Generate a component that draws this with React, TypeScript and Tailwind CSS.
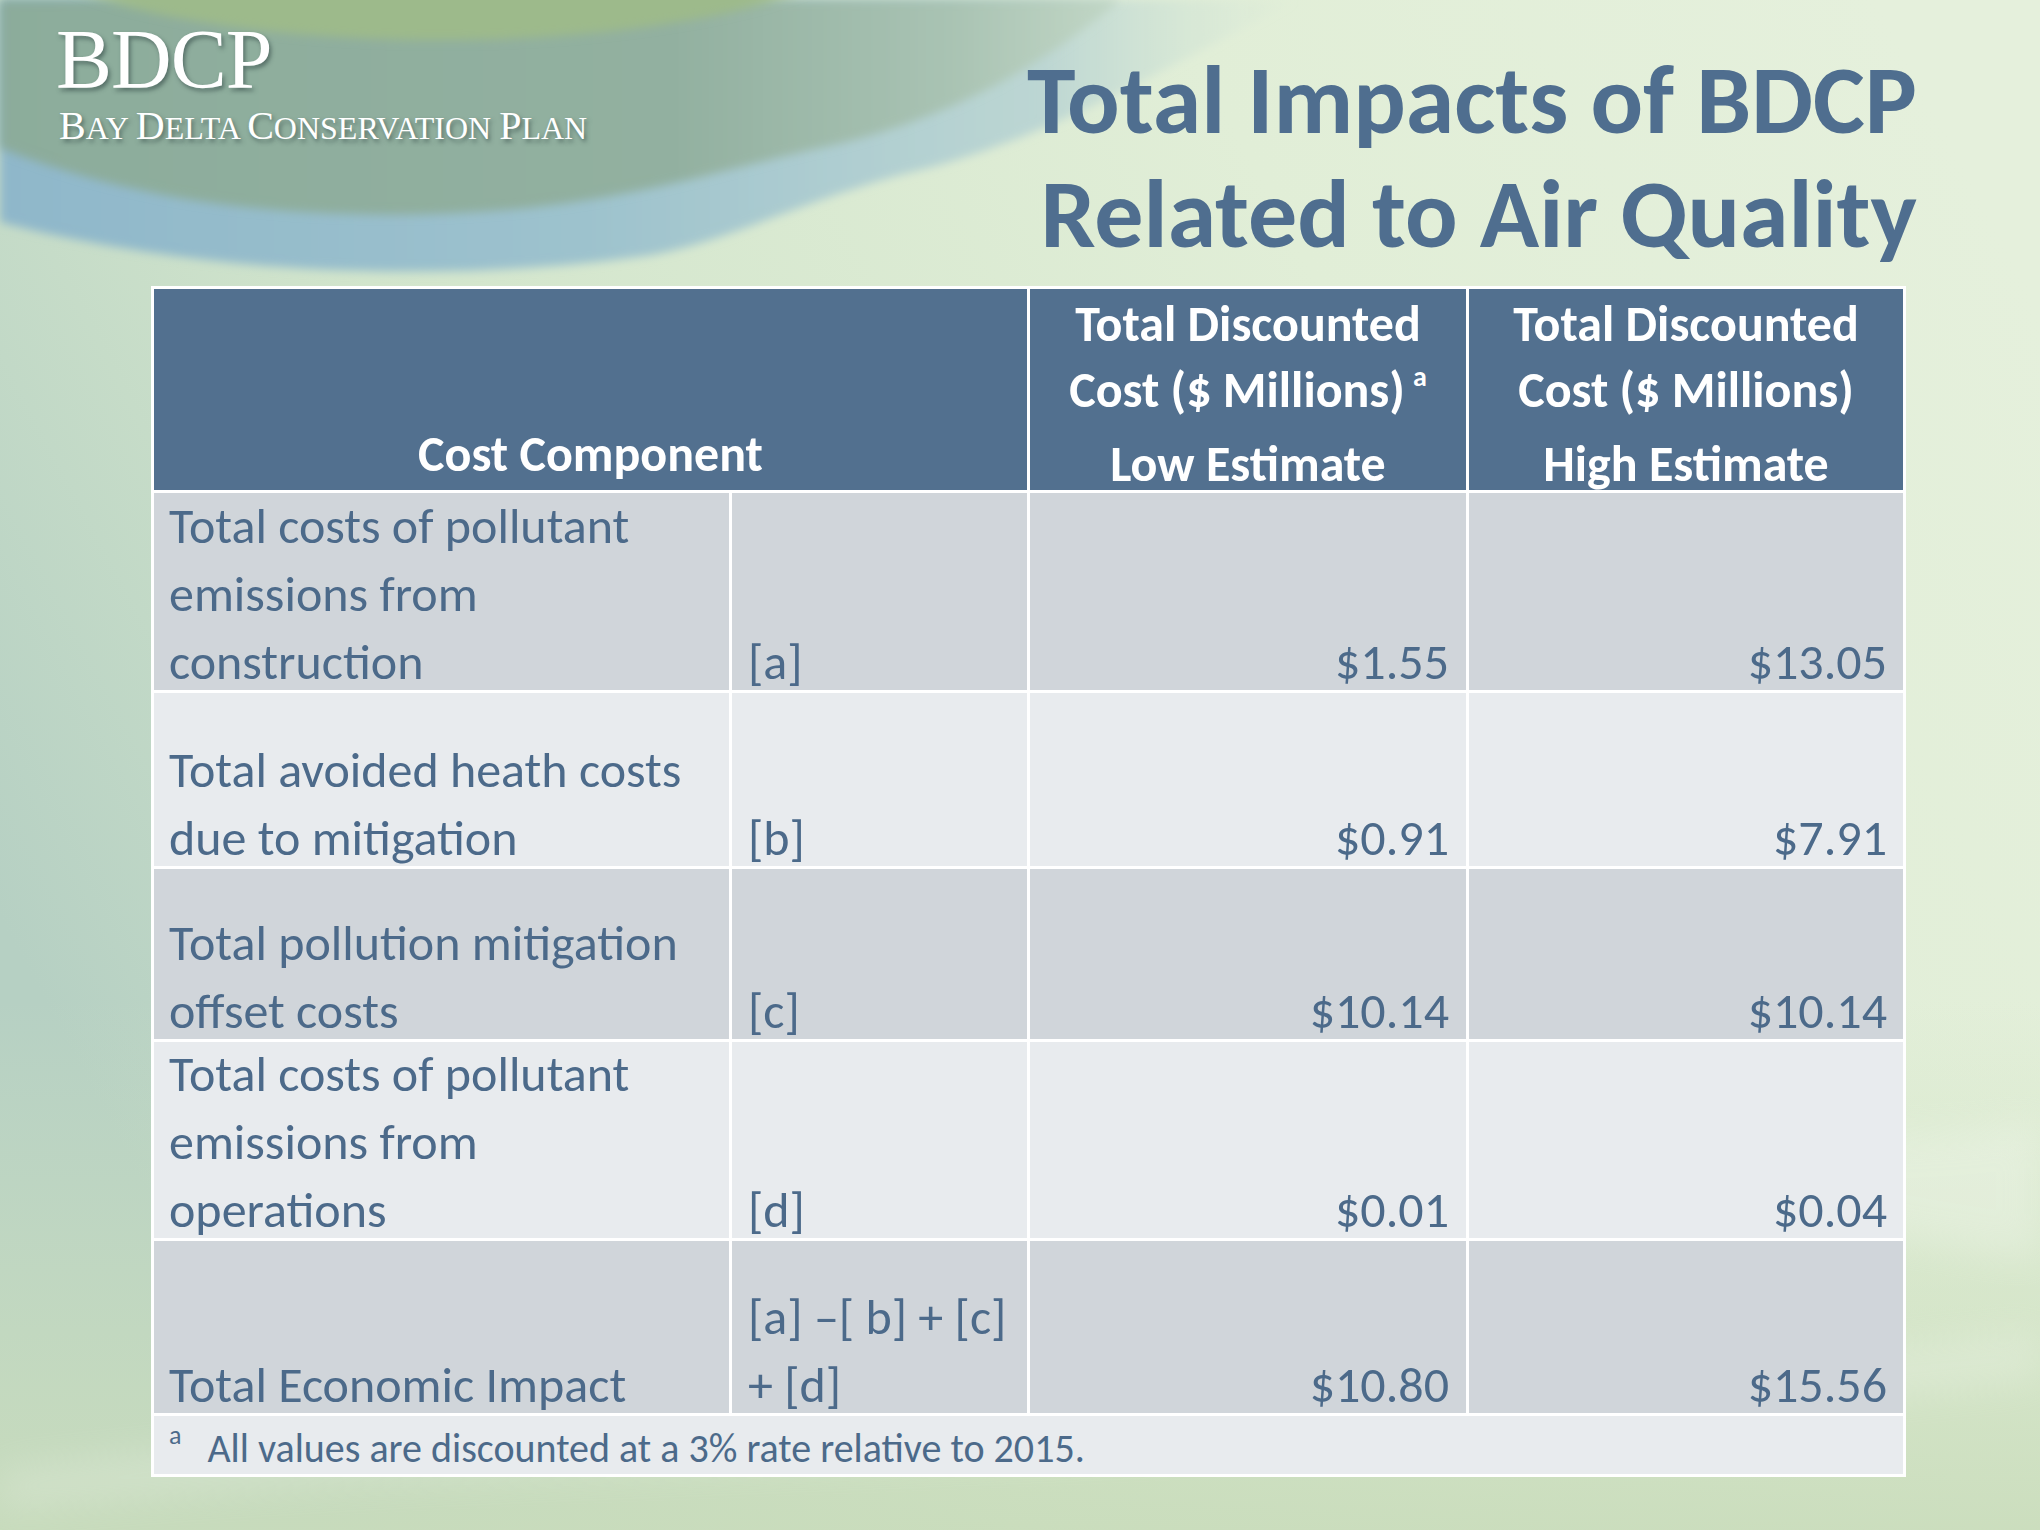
import React from 'react';

const rows = [
  { lines: ['Total costs of pollutant', 'emissions from', 'construction'], ref: ['[a]'], low: '$1.55', high: '$13.05', h: 'h-[197px]', shade: 'bg-[#d0d5da]' },
  { lines: ['Total avoided heath costs', 'due to mitigation'], ref: ['[b]'], low: '$0.91', high: '$7.91', h: 'h-[173px]', shade: 'bg-[#e8ebee]' },
  { lines: ['Total pollution mitigation', 'offset costs'], ref: ['[c]'], low: '$10.14', high: '$10.14', h: 'h-[170px]', shade: 'bg-[#d0d5da]' },
  { lines: ['Total costs of pollutant', 'emissions from', 'operations'], ref: ['[d]'], low: '$0.01', high: '$0.04', h: 'h-[196px]', shade: 'bg-[#e8ebee]' },
  { lines: ['Total Economic Impact'], ref: ['[a] \u2013[ b] + [c]', '+ [d]'], low: '$10.80', high: '$15.56', h: 'h-[172px]', shade: 'bg-[#d0d5da]' },
];

const Background = () => (
  <svg className="absolute inset-0 w-full h-full" viewBox="0 0 2040 1530" preserveAspectRatio="none">
    <defs>
      <linearGradient id="base" x1="0" y1="0.6" x2="1" y2="0.2">
        <stop offset="0" stopColor="#b6d0c3" />
        <stop offset="0.3" stopColor="#d2e5cc" />
        <stop offset="0.7" stopColor="#e1eed7" />
        <stop offset="1" stopColor="#e5f0dc" />
      </linearGradient>
      <linearGradient id="bottom" x1="0" y1="0" x2="0" y2="1">
        <stop offset="0" stopColor="#cfe2c2" stopOpacity="0" />
        <stop offset="1" stopColor="#c9dcbb" stopOpacity="0.9" />
      </linearGradient>
      <linearGradient id="blue" x1="0" y1="0" x2="1" y2="0">
        <stop offset="0" stopColor="#8fb7ca" />
        <stop offset="0.45" stopColor="#9dc2cd" />
        <stop offset="0.8" stopColor="#bcd6d3" />
        <stop offset="1" stopColor="#d3e5d6" stopOpacity="0" />
      </linearGradient>
      <linearGradient id="green" x1="0" y1="0" x2="1" y2="0">
        <stop offset="0" stopColor="#8cac9b" />
        <stop offset="0.6" stopColor="#92b0a0" />
        <stop offset="0.85" stopColor="#a9c3b3" />
        <stop offset="1" stopColor="#c2d7c6" />
      </linearGradient>
      <filter id="soft" x="-10%" y="-10%" width="120%" height="120%">
        <feGaussianBlur stdDeviation="5" />
      </filter>
      <filter id="softer" x="-10%" y="-50%" width="120%" height="200%">
        <feGaussianBlur stdDeviation="18" />
      </filter>
    </defs>
    <rect width="2040" height="1530" fill="url(#base)" />
    <rect y="1000" width="2040" height="530" fill="url(#bottom)" />
    <path d="M0,1470 C500,1400 1100,1440 2040,1330 L2040,1380 C1200,1480 600,1450 0,1510 Z" fill="#ffffff" opacity="0.18" filter="url(#softer)" />
    <path d="M1700,1150 C1850,1130 1950,1140 2040,1120 L2040,1260 C1950,1250 1850,1230 1700,1200 Z" fill="#ffffff" opacity="0.22" filter="url(#softer)" />
    <path d="M0,0 L1300,0 C1200,45 1060,140 900,175 C790,205 710,250 630,258 C520,272 400,276 268,266 C150,256 60,238 0,222 Z" fill="url(#blue)" filter="url(#soft)" />
    <path d="M0,0 L1120,0 C1055,55 960,120 810,150 C705,175 625,200 505,210 C405,218 305,216 205,202 C125,190 55,170 0,148 Z" fill="url(#green)" filter="url(#soft)" />
    <ellipse cx="440" cy="-78" rx="450" ry="118" fill="#9dba8b" filter="url(#soft)" />
  </svg>
);

const Cell = ({ className, children }: { className: string; children: React.ReactNode }) => (
  <div className={`flex flex-col justify-end overflow-visible ${className}`}>{children}</div>
);

export default function App() {
  return (
    <div className="relative w-[2040px] h-[1530px] overflow-hidden font-[Carlito,Lato,sans-serif]">
      <Background />
      <div className="relative flex flex-col">
        <div className="flex justify-between h-[286px]">
          <div className="pl-[56px] pt-[18px] text-white font-['Liberation_Serif',serif] [text-shadow:2px_3px_4px_rgba(40,60,60,0.55)]">
            <div className="text-[84px] leading-[84px] tracking-[-1px]">BDCP</div>
            <div className="mt-[4px] text-[32px] leading-[40px] pl-[3px]">
              <span className="text-[40px]">B</span>AY <span className="text-[40px]">D</span>ELTA{' '}
              <span className="text-[40px]">C</span>ONSERVATION <span className="text-[40px]">P</span>LAN
            </div>
          </div>
          <h1 className="pt-[43px] pr-[123px] text-right text-[98px] leading-[114px] font-bold text-[#4f6e8f]">
            Total Impacts of BDCP
            <br />
            Related to Air Quality
          </h1>
        </div>

        <div className="ml-[151px] w-[1755px] bg-white p-[3px]">
          <div className="grid grid-cols-[575px_295px_436px_434px] gap-[3px] text-[#4c6a8a] text-[50px] leading-[68px]">
            <Cell className="col-span-2 h-[201px] bg-[#52708f] items-center">
              <div className="font-bold text-white pb-[2px]">Cost Component</div>
            </Cell>
            {['Low Estimate', 'High Estimate'].map((label, i) => (
              <Cell key={label} className="h-[201px] bg-[#52708f] items-center text-center">
                <div className="font-bold text-white leading-[66px] mb-[-7px]">
                  <div>Total Discounted</div>
                  <div>
                    Cost ($ Millions)
                    {i === 0 && <sup className="text-[28px] ml-[8px] align-[7px]">a</sup>}
                  </div>
                  <div className="mt-[8px]">{label}</div>
                </div>
              </Cell>
            ))}

            {rows.map((r) => (
              <React.Fragment key={r.lines.join(' ') + r.low}>
                <Cell className={`${r.h} ${r.shade} pl-[15px]`}>
                  <div className="mb-[-6px]">
                    {r.lines.map((l) => (
                      <div key={l}>{l}</div>
                    ))}
                  </div>
                </Cell>
                <Cell className={`${r.h} ${r.shade} pl-[16px]`}>
                  <div className="mb-[-6px]">
                    {r.ref.map((l) => (
                      <div key={l}>{l}</div>
                    ))}
                  </div>
                </Cell>
                <Cell className={`${r.h} ${r.shade} pr-[17px] text-right`}>
                  <div className="mb-[-6px]">{r.low}</div>
                </Cell>
                <Cell className={`${r.h} ${r.shade} pr-[16px] text-right`}>
                  <div className="mb-[-6px]">{r.high}</div>
                </Cell>
              </React.Fragment>
            ))}

            <div className="col-span-4 h-[58px] bg-[#e8ebee] pl-[15px] flex items-end text-[40px] leading-[48px]">
              <span className="text-[26px] leading-[30px] self-start mt-[4px] mr-[26px]">a</span>
              <span className="mb-[1px]">All values are discounted at a 3% rate relative to 2015.</span>
            </div>
          </div>
        </div>
      </div>
    </div>
  );
}
